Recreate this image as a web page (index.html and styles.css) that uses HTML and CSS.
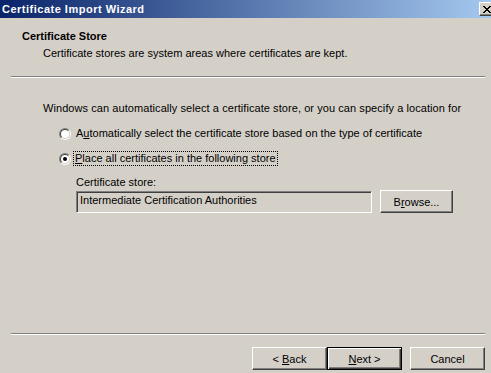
FILE: index.html
```html
<!DOCTYPE html>
<html lang="en">
<head>
  <meta charset="UTF-8" />
  <title>Certificate Import Wizard</title>
  <link rel="stylesheet" href="styles.css">
</head>
<body>
  <div class="window">

    <div class="titlebar">
      <span class="title">Certificate Import Wizard</span>
      <span class="btn-close">
        <svg width="8" height="7" viewBox="0 0 8 7"><path d="M0 0h2v1h1v1h2v-1h1v-1h2v1h-1v1h-1v1h-1v1h1v1h1v1h1v1h-2v-1h-1v-1h-2v1h-1v1h-2v-1h1v-1h1v-1h1v-1h-1v-1h-1v-1h-1z" fill="#000"/></svg>
      </span>
    </div>

    <div class="header">
      <div class="header-title">Certificate Store</div>
      <div class="header-sub">Certificate stores are system areas where certificates are kept.</div>
    </div>
    <div class="sep"></div>

    <div class="content">
      <p class="intro">Windows can automatically select a certificate store, or you can specify a location for</p>

      <div class="options">
        <div class="option">
          <span class="radio"><span class="radio-in"></span></span>
          <span class="option-label">A<u>u</u>tomatically select the certificate store based on the type of certificate</span>
        </div>
        <div class="option">
          <span class="radio"><span class="radio-in"><span class="dot"></span></span></span>
          <span class="option-label focus"><u>P</u>lace all certificates in the following store</span>
        </div>
      </div>

      <div class="store">
        <div class="store-label">Certificate store:</div>
        <div class="store-row">
          <div class="textbox">Intermediate Certification Authorities</div>
          <button class="btn btn-browse">B<u>r</u>owse...</button>
        </div>
      </div>
    </div>

    <div class="sep"></div>

    <div class="actions">
      <button class="btn">&lt; <u>B</u>ack</button>
      <button class="btn btn-default"><u>N</u>ext &gt;</button>
      <button class="btn btn-cancel">Cancel</button>
    </div>
  </div>
</body>
</html>
```

FILE: styles.css
```css
/* Ventana clásica */
body {
  margin: 0;
  width: 491px;
  height: 373px;
  overflow: hidden;
  background: #d4d0c8;
  font-family: 'Liberation Sans', Arial, sans-serif;
  font-size: 11px;
  line-height: 13px;
  color: #000;
}

.window {
  width: 497px;
  background: #d4d0c8;
}

/* Barra de título */
.titlebar {
  height: 18px;
  background: linear-gradient(to right, #0a246a, #a6caf0);
  display: flex;
  align-items: center;
  justify-content: space-between;
  padding-left: 2px;
  box-sizing: border-box;
}

.title {
  color: #fff;
  font-weight: bold;
  font-size: 11px;
  letter-spacing: 0.5px;
}

.btn-close {
  width: 16px;
  height: 14px;
  margin-right: 2px;
  box-sizing: border-box;
  background: #d4d0c8;
  border: 1px solid;
  border-color: #fff #404040 #404040 #fff;
  box-shadow: inset -1px -1px #808080;
  display: flex;
  align-items: center;
  justify-content: center;
}

/* Cabecera */
.header {
  height: 58px;
  box-sizing: border-box;
  padding: 12px 0 0 22px;
}

.header-title {
  font-weight: bold;
}

.header-sub {
  margin-top: 4px;
  padding-left: 21px;
}

.sep {
  margin-left: 11px;
  width: 474px;
  border-top: 1px solid #808080;
  border-bottom: 1px solid #fff;
}

/* Contenido */
.content {
  height: 255px;
  box-sizing: border-box;
  padding-left: 43px;
  overflow: hidden;
}

.intro {
  margin: 24px 0 0;
  letter-spacing: 0.07px;
}

.options {
  padding-left: 16px;
}

.option {
  margin-top: 12px;
  display: flex;
  align-items: center;
  height: 13px;
}

.radio {
  width: 12px;
  height: 12px;
  box-sizing: border-box;
  border-radius: 50%;
  border: 1px solid;
  border-color: #808080 #fff #fff #808080;
  flex-shrink: 0;
}

.radio-in {
  display: flex;
  align-items: center;
  justify-content: center;
  width: 10px;
  height: 10px;
  box-sizing: border-box;
  border-radius: 50%;
  border: 1px solid;
  border-color: #404040 #d4d0c8 #d4d0c8 #404040;
  background: #fff;
}

.dot {
  width: 4px;
  height: 4px;
  border-radius: 50%;
  background: #000;
}

.option-label {
  margin-left: 5px;
}

.option-label.focus {
  margin-left: 3px;
  padding: 0 1px;
  outline: 1px dotted #000;
}

.store {
  padding-left: 33px;
}

.store-label {
  margin-top: 11px;
}

.store-row {
  margin-top: 1px;
  display: flex;
  align-items: flex-start;
}

.textbox {
  margin-top: 1px;
  width: 296px;
  height: 22px;
  box-sizing: border-box;
  padding: 2px 3px;
  border: 1px solid;
  border-color: #808080 #fff #fff #808080;
  box-shadow: inset 1px 1px #404040, inset -1px -1px #d4d0c8;
}

/* Botones */
.btn {
  width: 75px;
  height: 23px;
  box-sizing: border-box;
  padding: 0;
  font-family: inherit;
  font-size: 11px;
  color: #000;
  background: #d4d0c8;
  border: 1px solid;
  border-color: #fff #404040 #404040 #fff;
  box-shadow: inset -1px -1px #808080;
}

.btn-browse {
  width: 73px;
  margin-left: 8px;
}

.btn-default {
  border: 1px solid #000;
  box-shadow: inset 1px 1px #fff, inset -1px -1px #404040, inset -2px -2px #808080;
}

.btn-cancel {
  margin-left: 8px;
}

.actions {
  margin-top: 12px;
  padding-right: 12px;
  display: flex;
  justify-content: flex-end;
}
```
